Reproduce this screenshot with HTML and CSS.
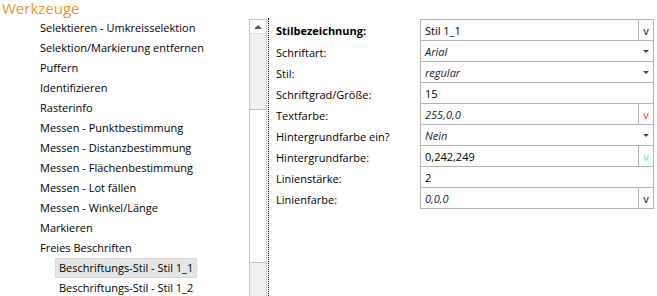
FILE: index.html
```html
<!DOCTYPE html>
<html lang="de">
<head>
  <meta charset="UTF-8">
  <title>Werkzeuge</title>
  <link rel="stylesheet" href="styles.css">
</head>
<body>

  <div class="title">Werkzeuge</div>

  <div class="main">
    <!-- Tool tree -->
    <div class="tree-panel">
      <ul class="tree">
        <li>Selektieren - Umkreisselektion</li>
        <li>Selektion/Markierung entfernen</li>
        <li>Puffern</li>
        <li>Identifizieren</li>
        <li>Rasterinfo</li>
        <li>Messen - Punktbestimmung</li>
        <li>Messen - Distanzbestimmung</li>
        <li>Messen - Flächenbestimmung</li>
        <li>Messen - Lot fällen</li>
        <li>Messen - Winkel/Länge</li>
        <li>Markieren</li>
        <li>Freies Beschriften</li>
        <li class="sub"><span class="selected">Beschriftungs-Stil - Stil 1_1</span></li>
        <li class="sub">Beschriftungs-Stil - Stil 1_2</li>
      </ul>
      <div class="scrollbar">
        <div class="scroll-btn"><span class="arrow-up"></span></div>
        <div class="scroll-thumb"></div>
      </div>
    </div>

    <!-- Style properties -->
    <div class="props">
      <div class="prop-row first">
        <div class="label bold">Stilbezeichnung:</div>
        <div class="field"><span class="value">Stil 1_1</span><span class="picker">v</span></div>
      </div>
      <div class="prop-row">
        <div class="label">Schriftart:</div>
        <div class="field"><span class="value italic">Arial</span><span class="caret"></span></div>
      </div>
      <div class="prop-row">
        <div class="label">Stil:</div>
        <div class="field"><span class="value italic">regular</span><span class="caret"></span></div>
      </div>
      <div class="prop-row">
        <div class="label">Schriftgrad/Größe:</div>
        <div class="field"><span class="value">15</span></div>
      </div>
      <div class="prop-row">
        <div class="label">Textfarbe:</div>
        <div class="field"><span class="value italic">255,0,0</span><span class="picker red">v</span></div>
      </div>
      <div class="prop-row">
        <div class="label">Hintergrundfarbe ein?</div>
        <div class="field"><span class="value italic">Nein</span><span class="caret"></span></div>
      </div>
      <div class="prop-row">
        <div class="label">Hintergrundfarbe:</div>
        <div class="field"><span class="value">0,242,249</span><span class="picker cyan">v</span></div>
      </div>
      <div class="prop-row">
        <div class="label">Linienstärke:</div>
        <div class="field"><span class="value">2</span></div>
      </div>
      <div class="prop-row">
        <div class="label">Linienfarbe:</div>
        <div class="field"><span class="value italic">0,0,0</span><span class="picker">v</span></div>
      </div>
    </div>
  </div>

</body>
</html>
```

FILE: styles.css
```css
/* Base */
* { box-sizing: border-box; margin: 0; padding: 0; }

body {
  font-family: 'Open Sans', 'Noto Sans', sans-serif;
  font-size: 11px;
  color: #000;
  background: #fff;
  width: 657px;
  height: 296px;
  overflow: hidden;
}

.title {
  height: 18px;
  line-height: 17px;
  padding-left: 2px;
  font-size: 15px;
  color: #f0962a;
}

.main { display: flex; height: 278px; }

/* Tree */
.tree-panel {
  width: 269px;
  display: flex;
  border-right: 1px dotted #000;
}

.tree { list-style: none; width: 249px; }
.tree li {
  height: 20px;
  line-height: 20px;
  padding-left: 40px;
  white-space: nowrap;
}
.tree li.sub { padding-left: 59px; }
.tree .selected {
  display: inline-block;
  height: 20px;
  line-height: 18px;
  margin-left: -4px;
  padding: 0 3px;
  background: #e6e6e6;
  border: 1px solid #d9d9d9;
}

.scrollbar {
  width: 18px;
  margin-top: 1px;
  background: #f0f0f0;
  border: 1px solid #c8c8c8;
  border-bottom: none;
}
.scroll-btn {
  height: 14px;
  display: flex;
  justify-content: center;
  align-items: center;
  background: #fff;
  border-bottom: 1px solid #dcdcdc;
}
.arrow-up {
  width: 0; height: 0;
  border-left: 4px solid transparent;
  border-right: 4px solid transparent;
  border-bottom: 4px solid #555;
}
.scroll-thumb {
  margin-top: 75px;
  height: 154px;
  background: #fff;
  border: 1px solid #c2c2c2;
  border-left: none;
  border-right: none;
}

/* Properties */
.props { padding: 1px 0 0 7px; }
.prop-row { display: flex; height: 21px; }
.prop-row.first { height: 22px; }

.label {
  width: 144px;
  display: flex;
  align-items: center;
  padding-top: 1px;
}
.bold { font-weight: bold; }

.field {
  width: 234px;
  display: flex;
  border: 1px solid #b4b4b4;
  border-top: none;
}
.prop-row.first .field { border-top: 1px solid #b4b4b4; }

.value {
  flex: 1;
  display: flex;
  align-items: center;
  padding-left: 4px;
}
.italic { font-style: italic; color: #1a1a30; }

.picker {
  width: 15px;
  display: flex;
  justify-content: center;
  align-items: center;
  border-left: 1px solid #b4b4b4;
  font-size: 11px;
}
.picker.red { color: #ff2a1a; }
.picker.cyan { color: #33e6f2; }

.caret {
  width: 15px;
  display: flex;
  justify-content: center;
  align-items: center;
}
.caret::after {
  content: '';
  border-left: 3px solid transparent;
  border-right: 3px solid transparent;
  border-top: 3px solid #444;
}
```
